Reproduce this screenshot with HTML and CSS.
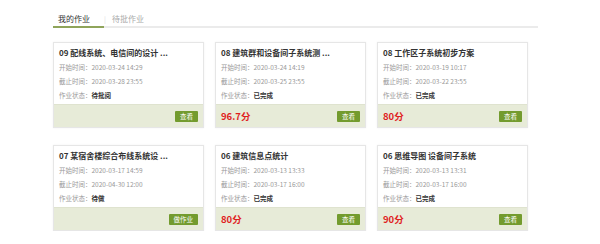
FILE: index.html
```html
<!DOCTYPE html>
<html lang="zh-CN">
<head>
    <meta charset="UTF-8">
    <meta name="viewport" content="width=device-width, initial-scale=1.0">
    <title>我的作业</title>
    <link rel="stylesheet" href="styles.css">
</head>
<body>
    <div class="page">
        <div class="tabs">
            <div class="tab active">我的作业</div>
            <span class="sep">|</span>
            <div class="tab">待批作业</div>
        </div>
        <div class="cards">
            <div class="card">
                <div class="card-body">
                    <div class="title">09 配线系统、电信间的设计 ...</div>
                    <div class="line">开始时间：2020-03-24 14:29</div>
                    <div class="line">截止时间：2020-03-28 23:55</div>
                    <div class="line">作业状态：<b>待批阅</b></div>
                </div>
                <div class="card-foot">
                    <span class="score"></span>
                    <button class="btn">查看</button>
                </div>
            </div>
            <div class="card">
                <div class="card-body">
                    <div class="title">08 建筑群和设备间子系统测 ...</div>
                    <div class="line">开始时间：2020-03-24 14:19</div>
                    <div class="line">截止时间：2020-03-25 23:55</div>
                    <div class="line">作业状态：<b>已完成</b></div>
                </div>
                <div class="card-foot">
                    <span class="score">96.7分</span>
                    <button class="btn">查看</button>
                </div>
            </div>
            <div class="card">
                <div class="card-body">
                    <div class="title">08 工作区子系统初步方案</div>
                    <div class="line">开始时间：2020-03-19 10:17</div>
                    <div class="line">截止时间：2020-03-22 23:55</div>
                    <div class="line">作业状态：<b>已完成</b></div>
                </div>
                <div class="card-foot">
                    <span class="score">80分</span>
                    <button class="btn">查看</button>
                </div>
            </div>
            <div class="card">
                <div class="card-body">
                    <div class="title">07 某宿舍楼综合布线系统设 ...</div>
                    <div class="line">开始时间：2020-03-17 14:59</div>
                    <div class="line">截止时间：2020-04-30 12:00</div>
                    <div class="line">作业状态：<b>待做</b></div>
                </div>
                <div class="card-foot">
                    <span class="score"></span>
                    <button class="btn">做作业</button>
                </div>
            </div>
            <div class="card">
                <div class="card-body">
                    <div class="title">06 建筑信息点统计</div>
                    <div class="line">开始时间：2020-03-13 13:33</div>
                    <div class="line">截止时间：2020-03-17 16:00</div>
                    <div class="line">作业状态：<b>已完成</b></div>
                </div>
                <div class="card-foot">
                    <span class="score">80分</span>
                    <button class="btn">查看</button>
                </div>
            </div>
            <div class="card">
                <div class="card-body">
                    <div class="title">06 思维导图 设备间子系统</div>
                    <div class="line">开始时间：2020-03-13 13:31</div>
                    <div class="line">截止时间：2020-03-17 16:00</div>
                    <div class="line">作业状态：<b>已完成</b></div>
                </div>
                <div class="card-foot">
                    <span class="score">90分</span>
                    <button class="btn">查看</button>
                </div>
            </div>
        </div>
    </div>
</body>
</html>
```

FILE: styles.css
```css
body {
    margin: 0;
    background: #fff;
    font-family: "Noto Sans CJK SC", "Noto Sans", sans-serif;
    color: #333;
}
.page {
    width: 485px;
    margin-left: 53px;
    padding-top: 11px;
}
.tabs {
    display: flex;
    align-items: center;
    height: 15px;
    border-bottom: 2px solid #ebebeb;
    font-size: 8px;
}
.tab {
    height: 15px;
    line-height: 15px;
    padding: 0 5px;
    color: #aaa;
}
.tab.active {
    width: 41px;
    color: #333;
    border-bottom: 2px solid #8fa45a;
    margin-bottom: -2px;
}
.sep {
    color: #ddd;
    font-size: 7px;
    margin: 0 1px 0 0;
}
.cards {
    display: grid;
    grid-template-columns: repeat(3, 151px);
    column-gap: 11px;
    row-gap: 17px;
    margin-top: 14px;
}
.card {
    border: 1px solid #e6e6e6;
    box-shadow: 0 0 2px rgba(0, 0, 0, 0.06);
    height: 84px;
    display: flex;
    flex-direction: column;
}
.card-body {
    height: 61px;
    padding: 0 5px;
    background: #fff;
}
.title {
    font-size: 8px;
    font-weight: bold;
    color: #333;
    line-height: 14px;
    margin-top: 3px;
    white-space: nowrap;
}
.line {
    font-size: 6.5px;
    color: #999;
    line-height: 14px;
}
.line b {
    color: #333;
}
.card-foot {
    flex: 1;
    background: #e7ebd8;
    border-top: 1px solid #dfe3cf;
    display: flex;
    align-items: center;
    justify-content: space-between;
    padding: 0 5px;
}
.score {
    color: #e01e1e;
    font-weight: bold;
    font-size: 9.5px;
}
.btn {
    border: 0;
    border-radius: 1px;
    background: #739b2e;
    color: #fff;
    font-family: inherit;
    font-size: 6.5px;
    height: 11px;
    line-height: 11px;
    padding: 0 5px;
    cursor: pointer;
}
```
